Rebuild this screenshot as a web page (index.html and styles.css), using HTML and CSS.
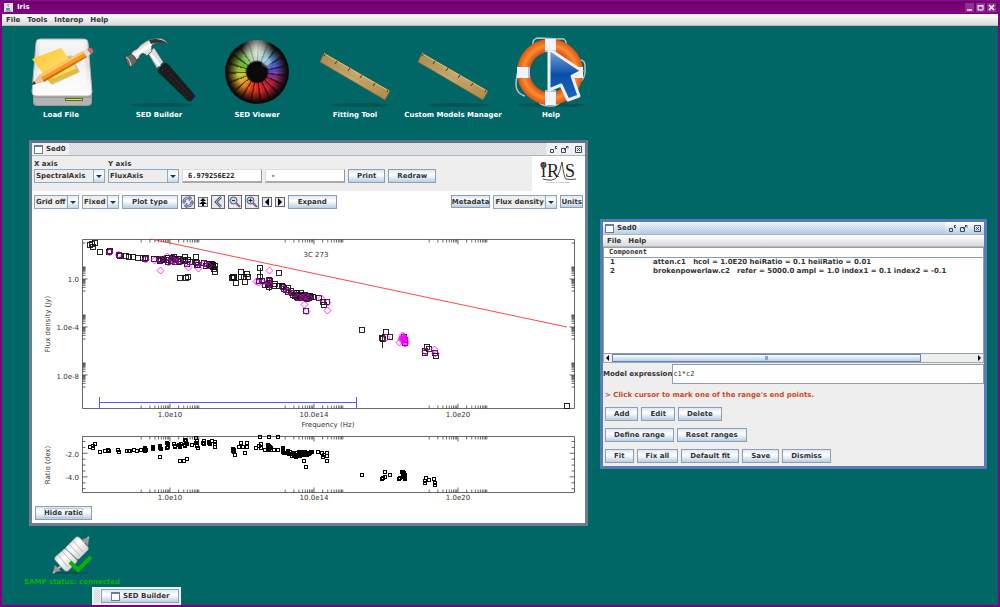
FILE: index.html
```html
<!DOCTYPE html>
<html lang="en">
<head>
    <meta charset="UTF-8">
    <meta name="viewport" content="width=device-width, initial-scale=1.0">
    <title>Iris</title>
    <link rel="stylesheet" href="styles.css">
</head>
<body>
    <div class="app">
        <header class="app-title">
            <svg class="java" viewBox="0 0 9 9"><rect width="9" height="9" fill="#dfe6ea"/><path d="M4.500 1q-1.500 1.500 0 2.500" stroke="#d33" fill="none"/><path d="M2 5h4v1.500q-2 1-4 0z" fill="#68a"/><path d="M1.500 8h6" stroke="#47a"/></svg>
            <h1>Iris</h1>
            <div class="app-controls">
                <button aria-label="Minimize"><svg viewBox="0 0 9 9"><path d="M2 7h5" stroke="#fff" stroke-width="1.300"/></svg></button>
                <button aria-label="Maximize"><svg viewBox="0 0 9 9"><path d="M2 3h5v4H2z" stroke="#fff" fill="none"/><path d="M1.500 2.500h6" stroke="#fff"/></svg></button>
                <button aria-label="Close"><svg viewBox="0 0 9 9"><path d="M2 2l5 5M7 2L2 7" stroke="#fff" stroke-width="1.500"/></svg></button>
            </div>
        </header>
        <nav class="menubar">
            <button>File</button>
            <button>Tools</button>
            <button>Interop</button>
            <button>Help</button>
        </nav>

        <main class="desktop">
            <div class="launchers">
                <button class="launcher">
                    <svg viewBox="0 0 72 72">
                        <defs>
                            <linearGradient id="drive" x1="0" y1="0" x2="0" y2="1"><stop offset="0" stop-color="#f4f4f4"/><stop offset=".3" stop-color="#dcdcdc"/><stop offset="1" stop-color="#fff"/></linearGradient>
                            <linearGradient id="note" x1="0" y1="0" x2="1" y2="1"><stop offset="0" stop-color="#fdc832"/><stop offset="1" stop-color="#ffe680"/></linearGradient>
                        </defs>
                        <path d="M8 56v10q0 4 4 4h50q5 0 5-4V56z" fill="#999"/>
                        <path d="M9 62h57v4q0 3-4 3H13q-4 0-4-3z" fill="#b4b4b4"/>
                        <path d="M15 3h44q4 0 4 4l4 49q0 4-4 4H11q-4 0-4-4l4-49q0-4 4-4z" fill="url(#drive)" stroke="#b5b5b5"/>
                        <path d="M15 8q0-2 2-2h40q2 0 2 2l3 40q-25 12-50 0z" fill="#fff" opacity=".5"/>
                        <rect x="40" y="62" width="18" height="3" fill="#5c6a20"/><rect x="41" y="63" width="16" height="1" fill="#c8f040"/>
                        <path d="M15 31l31-12 9 17-28 13z" fill="#000" opacity=".2"/>
                        <path d="M7 23l29-11 18 24-28 12z" fill="url(#note)"/>
                        <path d="M29 42l23-10 2 4-28 12-4-5z" fill="#e5b93a"/>
                        <path d="M14 39l44-24 4 6-43 25z" fill="#f59a22"/>
                        <path d="M14 39l44-24 1 2-44 25z" fill="#ffc766"/>
                        <path d="M18 44l43-24 1 1-43 25z" fill="#c96f10"/>
                        <path d="M14 39l5 7-13 3z" fill="#e8c596"/><path d="M9 45l2 3-5 1z" fill="#333"/>
                        <path d="M58 15l4-2 4 5-4 3z" fill="#ddd"/><path d="M62 13q4-3 6 1 1 3-2 4z" fill="#d9606a"/>
                    </svg>
                    <span>Load File</span>
                </button>
                <button class="launcher">
                    <svg viewBox="0 0 72 72">
                        <defs>
                            <linearGradient id="steel" x1="0" y1="0" x2="1" y2="1"><stop offset="0" stop-color="#555"/><stop offset=".4" stop-color="#fff"/><stop offset=".7" stop-color="#aaa"/><stop offset="1" stop-color="#eee"/></linearGradient>
                        </defs>
                        <ellipse class="shadow" cx="39" cy="69" rx="31" ry="2"/>
                        <path d="M25 17l6-5 9 14-6 6z" fill="#ddd" stroke="#888" stroke-width=".5"/>
                        <path d="M28 18l9 12" stroke="#fff" stroke-width="2"/>
                        <path d="M8 18q2-4 6-5Q22 3 32 2.500q9-1 13 5-8-4-16 1.500-1 4 0 6l-5 5q-3-4-6-2-2 2-2 4l-6 4z" fill="url(#steel)" stroke="#444" stroke-width=".6"/>
                        <path d="M26 4q10-3 18 3-8-2-16 1z" fill="#333"/>
                        <path d="M2 21l6-3q5 2 6 8l-6 5q-4-1-6-10z" fill="#666" stroke="#333" stroke-width=".5"/><path d="M3 21q4 2 5 9" stroke="#ddd" fill="none"/>
                        <path d="M35 34l6-7q2-1 4 1l26 30q2 3-1 5-2 4-6 1L36 37q-2-1-1-3z" fill="#1c1c1c"/>
                        <path d="M39 34l25 27M42 32l25 27" stroke="#484848" stroke-width="1" stroke-dasharray="1 3"/>
                    </svg>
                    <span>SED Builder</span>
                </button>
                <button class="launcher">
                    <i class="eye"></i>
                    <span>SED Viewer</span>
                </button>
                <button class="launcher">
                    <svg viewBox="0 0 72 72">
                        <defs>
                            <linearGradient id="wood" x1="0" y1="0" x2="1" y2="1"><stop offset="0" stop-color="#a88850"/><stop offset=".5" stop-color="#c9a96c"/><stop offset="1" stop-color="#a98748"/></linearGradient>
                            <g id="ruler">
                                <ellipse class="shadow" cx="41" cy="69" rx="30" ry="2"/>
                                <path d="M5 17l66 38-5 9-65-38z" fill="url(#wood)" stroke="#7c6030" stroke-width=".7"/>
                                <path d="M5 17.500l65 37.500" stroke="#dcc08a" stroke-width="1"/>
                                <path d="M3 22l65 38" stroke="#b8985c" stroke-width="1"/>
                                <path d="M6 18l-1 2M18 25l-2 3M31 32l-2 3M43 39l-2 3M56 47l-2 3M69 54l-1 2" stroke="#4a3510"/>
                            </g>
                        </defs>
                        <use href="#ruler"/>
                    </svg>
                    <span>Fitting Tool</span>
                </button>
                <button class="launcher">
                    <svg viewBox="0 0 72 72"><use href="#ruler"/></svg>
                    <span>Custom Models Manager</span>
                </button>
                <button class="launcher">
                    <svg viewBox="0 0 72 72">
                        <defs>
                            <radialGradient id="buoy" gradientUnits="userSpaceOnUse" cx="35" cy="36" r="33"><stop offset=".6" stop-color="#d0500c"/><stop offset=".8" stop-color="#ff8a34"/><stop offset="1" stop-color="#d9560e"/></radialGradient>
                            <linearGradient id="pointer" x1="0" y1="0" x2="0" y2="1"><stop offset="0" stop-color="#7fa9dd"/><stop offset=".5" stop-color="#0b50a8"/><stop offset="1" stop-color="#1668c4"/></linearGradient>
                        </defs>
                        <ellipse class="shadow" cx="36" cy="69" rx="34" ry="2"/>
                        <path d="M17 18q2-6 1-12 1-4 6-4l21 1q6-1 6 4v5M65 24q5 0 5 6v6q-1 9-6 10M5 30q-4 8-4 20 1 8 9 10M22 62q2 8 12 8 10 1 12-7" fill="none" stroke="#b8c4c4" stroke-width="1.500"/>
                        <circle cx="35" cy="36" r="26.500" fill="none" stroke="url(#buoy)" stroke-width="13"/>
                        <path d="M30 3h11v13H30zM30 56h11v13H30zM2 31h13v11H2zM55 31h13v11H55z" fill="#f2f4fc"/>
                        <path d="M30 55h11M30 15h11M14 31v11" stroke="#a9bfe8" stroke-width="2"/>
                        <path d="M34 13l33 22-10 5 7 20-11 4-7-15-12 5z" fill="url(#pointer)" stroke="#eee" stroke-width="3" stroke-linejoin="round"/>
                    </svg>
                    <span>Help</span>
                </button>
            </div>

            <section class="window viewer">
                <header class="window-title">
                    <i class="frame-icon"></i>
                    <h2>Sed0</h2>
                    <i class="grip"></i>
                    <div class="window-controls">
                        <button aria-label="Iconify"><svg viewBox="0 0 9 9"><use href="#iconify"/></svg></button>
                        <button aria-label="Maximize"><svg viewBox="0 0 9 9"><use href="#enlarge"/></svg></button>
                        <button aria-label="Close"><svg viewBox="0 0 9 9"><use href="#shut"/></svg></button>
                    </div>
                </header>
                <div class="coords">
                    <div class="coords-fields">
                        <div class="axis">
                            <label for="xAxis">X axis</label>
                            <span class="combo"><select id="xAxis"><option>SpectralAxis</option></select></span>
                        </div>
                        <div class="axis">
                            <label for="yAxis">Y axis</label>
                            <span class="combo"><select id="yAxis"><option>FluxAxis</option></select></span>
                        </div>
                        <input class="readout" type="text" aria-label="X value" value="6.979256E22">
                        <input class="readout" type="text" aria-label="Y value" value="-">
                        <button class="btn">Print</button>
                        <button class="btn">Redraw</button>
                    </div>
                    <svg class="logo" viewBox="0 0 53 35">
                        <text x="9" y="21" font-size="18">ı</text>
                        <text x="15" y="21" font-size="18">R</text>
                        <text x="33" y="21" font-size="18">S</text>
                        <path d="M11 23q10 3 14-2 3-5 5-15 2 16 4 17 5 1 10 0" fill="none" stroke="#222" stroke-width=".8"/>
                        <circle cx="11.500" cy="9" r="3" fill="#333"/><circle cx="10.500" cy="8.500" r="1" fill="#d33"/><circle cx="12.500" cy="8.500" r="1" fill="#3a6"/><circle cx="11.500" cy="10.500" r="1" fill="#46c"/>
                        <text x="26" y="27" font-size="2" text-anchor="middle">VAO SED ANALYSIS TOOL</text>
                    </svg>
                </div>
                <div class="tools">
                    <span class="combo"><select aria-label="Grid"><option>Grid off</option></select></span>
                    <span class="combo"><select aria-label="Range"><option>Fixed</option></select></span>
                    <button class="btn wide">Plot type</button>
                    <button class="tool" aria-label="Reset"><svg viewBox="0 0 12 12"><path d="M2 6q0-4 4-4h2M10 6q0 4-4 4H4" fill="none" stroke="#557" stroke-width="2.500"/><path d="M2 6q0-4 4-4h2M10 6q0 4-4 4H4" fill="none" stroke="#b4b8dc" stroke-width="1.300"/><path d="M7 0l3 2-3 3zM5 7L2 10l3 2zM0 5h4L2 8zM8 7l2-3 2 3z" fill="#8c8cbc" stroke="#446" stroke-width=".4"/></svg></button>
                    <button class="tool small" aria-label="Scroll up"><svg viewBox="0 0 8 8"><path d="M4 0l3 3H1zM4 3l4 3H5v2H3V6H0z"/></svg></button>
                    <button class="tool" aria-label="Back"><svg viewBox="0 0 12 12"><path d="M9 1L4 6l5 5" fill="none" stroke="#557" stroke-width="2.500"/><path d="M9 1L4 6l5 5" fill="none" stroke="#b4b8dc"/></svg></button>
                    <button class="tool" aria-label="Zoom out"><svg viewBox="0 0 12 12"><circle cx="4.500" cy="4.500" r="3.500" fill="#ccd6ee" stroke="#557"/><path d="M3 4.500h3" stroke="#224"/><path d="M7 7l4 4" stroke="#86608c" stroke-width="2"/></svg></button>
                    <button class="tool" aria-label="Zoom in"><svg viewBox="0 0 12 12"><circle cx="4.500" cy="4.500" r="3.500" fill="#ccd6ee" stroke="#557"/><path d="M2.500 4.500h4M4.500 2.500v4" stroke="#224"/><path d="M7 7l4 4" stroke="#86608c" stroke-width="2"/></svg></button>
                    <button class="tool small" aria-label="Left"><svg viewBox="0 0 8 8"><path d="M6 0v8L2 4z"/></svg></button>
                    <button class="tool small" aria-label="Right"><svg viewBox="0 0 8 8"><path d="M2 0v8l4-4z"/></svg></button>
                    <button class="btn wide">Expand</button>
                    <div class="tools-right">
                        <button class="btn tight">Metadata</button>
                        <span class="combo"><select aria-label="Y quantity"><option>Flux density</option></select></span>
                        <button class="btn tight">Units</button>
                    </div>
                </div>
                <svg class="chart" id="chart" viewBox="32 213 553 290"></svg>
                <footer class="viewer-footer"><button class="btn"><span class="focused">Hide ratio</span></button></footer>
            </section>

            <section class="window fitting">
                <header class="window-title">
                    <i class="frame-icon"></i>
                    <h2>Sed0</h2>
                    <i class="grip"></i>
                    <div class="window-controls">
                        <button aria-label="Iconify"><svg viewBox="0 0 9 9"><path id="iconify" d="M1.500 4.500h3v3h-3zM6 3.500h2M6.500 3V1M6 3l2-2" fill="none" stroke="#3b4868"/></svg></button>
                        <button aria-label="Maximize"><svg viewBox="0 0 9 9"><path id="enlarge" d="M1.500 3.500h4v4h-4zM4 5l4-4M6 1.500h2v2" fill="none" stroke="#3b4868"/></svg></button>
                        <button aria-label="Close"><svg viewBox="0 0 9 9"><path id="shut" d="M1.500 1.500h6v6h-6zM3 3l3 3M6 3L3 6" fill="none" stroke="#3b4868"/></svg></button>
                    </div>
                </header>
                <nav class="menubar">
                    <button>File</button>
                    <button>Help</button>
                </nav>
                <div class="components">
                    <table>
                        <thead>
                            <tr><th colspan="2">Component</th></tr>
                        </thead>
                        <tbody>
                            <tr><td>1</td><td>atten.c1&nbsp;&nbsp; hcol = 1.0E20 heiRatio = 0.1 heiiRatio = 0.01</td></tr>
                            <tr><td>2</td><td>brokenpowerlaw.c2&nbsp;&nbsp; refer = 5000.0 ampl = 1.0 index1 = 0.1 index2 = -0.1</td></tr>
                        </tbody>
                    </table>
                </div>
                <div class="scrollbar">
                    <button aria-label="Scroll left"><svg viewBox="0 0 8 8"><path d="M5 1v6L2 4z"/></svg></button>
                    <div class="track"><div class="thumb"></div></div>
                    <button aria-label="Scroll right"><svg viewBox="0 0 8 8"><path d="M3 1v6l3-3z"/></svg></button>
                </div>
                <div class="expression">
                    <label for="expression">Model expression</label>
                    <input type="text" id="expression" value="c1*c2">
                </div>
                <p class="hint">&gt; Click cursor to mark one of the range's end points.</p>
                <div class="actions">
                    <div class="row">
                        <button class="btn">Add</button>
                        <button class="btn">Edit</button>
                        <button class="btn">Delete</button>
                    </div>
                    <div class="row">
                        <button class="btn">Define range</button>
                        <button class="btn">Reset ranges</button>
                    </div>
                    <div class="row">
                        <button class="btn">Fit</button>
                        <button class="btn">Fix all</button>
                        <button class="btn">Default fit</button>
                        <button class="btn">Save</button>
                        <button class="btn">Dismiss</button>
                    </div>
                </div>
            </section>

            <button class="samp">
                <svg viewBox="0 0 40 40">
                    <defs><linearGradient id="plug" x1="0" y1="0" x2="1" y2="1"><stop offset="0" stop-color="#aaa"/><stop offset=".4" stop-color="#fff"/><stop offset="1" stop-color="#bbb"/></linearGradient></defs>
                    <ellipse class="shadow" cx="20" cy="38" rx="17" ry="1.500"/>
                    <path d="M31 8l6-6M1 38l8-7" stroke="#bbb" stroke-width="2"/>
                    <path d="M30 4l7-1-1 8zM1 37l2-7 6 6z" fill="#999"/>
                    <path d="M14 12L24 2q2-1 4 1l8 9q1 2 0 3l-9 9q-2 1-3-1l-10-9q-1-1 0-2z" fill="url(#plug)" stroke="#888" stroke-width=".6"/>
                    <path d="M3 22l9-8q1-1 3 1l9 9q2 2 1 3l-9 9q-2 1-4-1l-9-10q-1-1 0-3z" fill="url(#plug)" stroke="#888" stroke-width=".6"/>
                    <path d="M17 9l11 12M21 6l11 12M6 20l10 12M10 16l11 12" stroke="#bbb" fill="none"/>
                    <path d="M18 27l8 8 13-13" fill="none" stroke="#07b307" stroke-width="4"/>
                </svg>
                <span>SAMP status: connected</span>
            </button>

            <div class="dock">
                <i class="grip"></i>
                <button class="btn"><i class="frame-icon"></i>SED Builder</button>
            </div>
        </main>
    </div>

    <script src="chart.js"></script>
</body>
</html>
```

FILE: styles.css
```css
* {
    box-sizing: border-box;
}

body {
    margin: 0;
    font: bold 7px/10px "DejaVu Sans", sans-serif;
    color: #333;
}

button,
input,
select {
    font: inherit;
    color: inherit;
    margin: 0;
    padding: 0;
    border: 0;
    background: none;
    border-radius: 0;
}

button {
    white-space: nowrap;
}

svg {
    display: block;
}

h1,
h2,
p {
    margin: 0;
    font-size: 7px;
}

/* main application frame */
.app {
    display: flex;
    flex-direction: column;
    height: 100vh;
    border: 2px solid #800080;
    border-top: 0;
    overflow: hidden;
}

.app-title {
    display: flex;
    align-items: center;
    gap: 4px;
    height: 14px;
    padding: 0 2px;
    background: linear-gradient(#8a108a, #6e006e 2px, #860086);
    color: #fff;
}

.java {
    width: 9px;
    height: 9px;
}

.app-controls {
    display: flex;
    gap: 2px;
    margin-left: auto;
}

.app-controls button {
    width: 9px;
    height: 9px;
    background: #933093;
}

.menubar {
    display: flex;
    gap: 7px;
    height: 12px;
    padding: 0 4px;
    background: linear-gradient(#fff, #dadada);
    border-bottom: 1px solid #b8b8b8;
}

.desktop {
    position: relative;
    flex: 1;
    background: #006666;
}

/* desktop icons */
.launchers {
    display: flex;
    padding: 10px;
}

.launcher {
    display: flex;
    flex-direction: column;
    align-items: center;
    gap: 2px;
    width: 98px;
    color: #fff;
}

.launcher svg {
    width: 72px;
    height: 72px;
}

.shadow {
    fill: #004848;
    opacity: 0.6;
}

.eye {
    width: 64px;
    height: 64px;
    margin: 4px;
    border-radius: 50%;
    background:
        radial-gradient(circle at 65% 35%, #ffffff55 0 3px, transparent 6px),
        radial-gradient(circle, #0a0a0a 10px, transparent 12px),
        radial-gradient(ellipse at 50% 16%, #ffffffbb, transparent 34%),
        radial-gradient(circle, transparent 19px, #180808aa 26px, #0a0a0a 30px),
        repeating-conic-gradient(#00000088 0deg 3deg, transparent 6deg 13deg, #ffffff22 15deg, transparent 17deg 19deg),
        conic-gradient(#8cb08c, #58a8c8 35deg, #4858c8 70deg, #7038a0 95deg, #a02040 120deg, #d82020 170deg, #e03818 200deg, #e89828 230deg, #c8c828 260deg, #68b030 300deg, #8cb08c);
}

/* internal windows */
.window {
    position: absolute;
    border: 3px solid #6d7c90;
    border-top-color: #5d7388;
    background: #eee;
}

.viewer {
    left: 27px;
    top: 114px;
    width: 559px;
    background: #fff;
}

.fitting {
    left: 598px;
    top: 193px;
    width: 387px;
    border-color: #5a7ab5;
}

.window-title {
    display: flex;
    align-items: center;
    gap: 3px;
    height: 13px;
    padding: 0 2px;
    background: #f0f0f0;
    border-bottom: 1px solid #b0b4b8;
}

.fitting .window-title {
    background: linear-gradient(#fff, #b8cfe5);
}

.frame-icon {
    width: 9px;
    height: 9px;
    border: 1px solid #6c7c90;
    border-top-width: 2px;
    background: #fff;
}

.grip {
    flex: 1;
    align-self: stretch;
    background: conic-gradient(#d2d6da 25%, #ebeced 0 50%, #d2d6da 0 75%, #ebeced 0) 0 0 / 2px 2px;
}

.fitting .grip {
    background: conic-gradient(#8fa9cc55 25%, transparent 0 50%, #8fa9cc55 0 75%, transparent 0) 0 0 / 2px 2px;
}

.window-controls {
    display: flex;
    gap: 2px;
}

.window-controls button {
    width: 9px;
    height: 9px;
}

.window-controls button:last-child {
    margin-left: 3px;
}

/* metal look buttons and combos */
.btn {
    display: flex;
    align-items: center;
    justify-content: center;
    gap: 3px;
    height: 14px;
    padding: 0 8px;
    border: 1px solid #8d9fb1;
    background: linear-gradient(#dde8f3, #fff 40%, #b8cfe5);
}

.btn.wide {
    padding: 0 9px;
}

.btn.tight {
    height: 13px;
    padding: 0;
}

.combo {
    position: relative;
    display: flex;
}

.combo select {
    appearance: none;
    height: 14px;
    padding: 0 12px 0 1px;
    border: 1px solid #8fa6bd;
    background: #eee;
    white-space: nowrap;
}

.combo::before {
    content: "";
    position: absolute;
    right: 1px;
    top: 1px;
    bottom: 1px;
    width: 10px;
    border-left: 1px solid #8fa6bd;
    background: linear-gradient(#e4edf5, #fff 40%, #c4d7e9);
    pointer-events: none;
}

.combo::after {
    content: "";
    position: absolute;
    right: 3px;
    top: 6px;
    border: 3px solid transparent;
    border-top-color: #333;
    border-bottom: 0;
    pointer-events: none;
}

/* SED viewer */
.coords {
    display: flex;
    justify-content: space-between;
    height: 35px;
    background: #eee;
}

.coords-fields {
    display: flex;
    align-items: flex-end;
    gap: 3px;
    padding: 0 0 8px 2px;
}

.axis {
    display: flex;
    flex-direction: column;
}

.axis select {
    width: 71px;
}

.readout {
    width: 80px;
    height: 14px;
    padding: 0 5px;
    border: 1px solid #ddd;
    border-right-color: #999;
    border-bottom: 2px solid #aaa;
    background: #fff;
    color: #222;
    font-family: "DejaVu Sans Mono", monospace;
}

.logo {
    width: 53px;
    background: #fff;
    font-family: "Liberation Serif", serif;
    font-weight: normal;
    fill: #222;
}

.tools {
    display: flex;
    align-items: center;
    gap: 3px;
    padding: 4px 2px;
}

.tools-right {
    display: flex;
    gap: 3px;
    margin-left: auto;
}

.tool {
    width: 14px;
    height: 14px;
    border: 1px solid #667;
    background: #e4eaf0;
}

.tool.small {
    width: 10px;
    height: 10px;
}

.chart {
    width: 100%;
    font-weight: normal;
}

.chart text {
    fill: #333;
}

.axes {
    fill: none;
    stroke: #444;
    stroke-width: 0.8;
}

.flux-point {
    fill: none;
    stroke: #111;
    stroke-width: 0.9;
}

.ratio-point {
    fill: none;
    stroke: #000;
    stroke-width: 1;
}

.optical-point {
    fill: none;
    stroke: #f0f;
    stroke-width: 0.8;
}

.model {
    stroke: #f33;
    stroke-width: 0.9;
}

.range {
    fill: none;
    stroke: #44f;
    stroke-width: 0.9;
}

.viewer-footer {
    display: flex;
    padding: 3px;
}

.focused {
    outline: 1px solid #b8c8dc;
    outline-offset: -1px;
}

/* fitting tool */
.components {
    height: 107px;
    border: 1px solid #8d9fb1;
    background: #fff;
}

.components table {
    width: 100%;
    border-collapse: collapse;
}

.components th {
    padding: 0 5px;
    border-bottom: 1px solid #8d9fb1;
    text-align: left;
    line-height: 9px;
    font-family: "DejaVu Sans Mono", monospace;
}

.components td {
    padding: 0 6px;
    line-height: 9px;
}

.components td:first-child {
    width: 43px;
}

.scrollbar {
    display: flex;
    height: 9px;
    border: 1px solid #a0a8b0;
    border-top: 0;
}

.scrollbar button {
    width: 8px;
}

.track {
    flex: 1;
    background: #eee;
}

.thumb {
    width: 85%;
    height: 8px;
    border: 1px solid #6382bf;
    background:
        linear-gradient(#8ba6d0, #8ba6d0) center / 3px 4px no-repeat,
        linear-gradient(#fff, #b8cfe5);
}

.expression {
    display: flex;
    align-items: center;
    white-space: nowrap;
}

.expression input {
    flex: 1;
    min-width: 0;
    height: 20px;
    margin-top: 1px;
    border: 1px solid #8d9fb1;
    background: #fff;
    font-weight: normal;
    font-family: "DejaVu Sans Mono", monospace;
}

.hint {
    padding: 6px 2px 4px;
    color: #cc4a22;
}

.actions {
    display: flex;
    flex-direction: column;
    gap: 7px;
    padding: 3px 2px;
}

.row {
    display: flex;
    gap: 3px;
}

/* bottom of the desktop */
.samp {
    position: absolute;
    left: 22px;
    bottom: 18px;
    display: flex;
    flex-direction: column;
    align-items: center;
    gap: 2px;
    color: #00b800;
}

.samp svg {
    width: 40px;
    height: 40px;
}

.dock {
    position: absolute;
    left: 90px;
    bottom: 0;
    display: flex;
    gap: 1px;
    padding: 2px;
    background: #eee;
}

.dock .grip {
    width: 6px;
}

.dock .btn {
    padding: 0 9px;
}
```

FILE: chart.js
```js
const fluxPoints = [
    [90, 245], [95, 243], [93, 247], [92, 244], [100, 252], [109, 252], [110, 251], [119, 255], [120, 256], [126, 256], [129, 257],
    [133, 257], [138, 258], [143, 258], [145, 259], [146, 258], [154, 259], [160, 259], [161, 260], [163, 259], [164, 260],
    [167, 258], [168, 262], [172, 258], [175, 259], [175, 262], [178, 259], [179, 262], [181, 261], [185, 257], [185, 261],
    [187, 264], [190, 262], [188, 260], [196, 257], [196, 262], [197, 263], [198, 265], [204, 263], [206, 266], [209, 265],
    [210, 264], [212, 264], [213, 267], [215, 266], [215, 272], [180, 278], [186, 278], [188, 277],
    [160, 261], [167, 260], [168, 258], [171, 261], [174, 257], [176, 260], [180, 259], [183, 260], [197, 265], [207, 264],
    [213, 265], [214, 269], [211, 266],
    [232, 278], [234, 278], [234, 277], [233, 277], [236, 283], [241, 272], [241, 277], [244, 277], [245, 282], [247, 274],
    [248, 277], [260, 268], [260, 277], [259, 281], [262, 281], [265, 285], [269, 280], [269, 283], [269, 285], [269, 287],
    [270, 281], [268, 284], [270, 285], [274, 286], [275, 284], [279, 273], [279, 286], [283, 287], [284, 289], [282, 286],
    [288, 288], [288, 292], [286, 290], [292, 293], [293, 295], [295, 296], [291, 291], [294, 293], [296, 295],
    [297, 293], [297, 297], [299, 296], [301, 293], [301, 297], [303, 296], [305, 295], [306, 298], [308, 296], [309, 298],
    [298, 298], [300, 295], [302, 298], [304, 297], [305, 297], [307, 296], [310, 296],
    [311, 297], [313, 297], [319, 298], [307, 299], [323, 302], [324, 305], [327, 302], [306, 311],
    [362, 330], [386, 332], [390, 337], [382, 338], [383, 339], [404, 337], [405, 340], [405, 343], [427, 347], [425, 351],
    [425, 353], [429, 349], [435, 353], [436, 356], [567, 406]
];

const opticalPoints = [
    [109, 252], [118, 254], [145, 259], [154, 260], [160, 259], [167, 256], [168, 262], [160, 270], [173, 260], [175, 261],
    [179, 260], [188, 267], [187, 263], [198, 268], [197, 263], [204, 263], [208, 265], [256, 281], [258, 282], [262, 282],
    [269, 270], [268, 281], [269, 284], [283, 288], [288, 291], [293, 293], [298, 297], [302, 297], [305, 296], [308, 297],
    [304, 304], [306, 311], [321, 298], [327, 302], [327, 310], [386, 337], [399, 342], [402, 335], [403, 336], [402, 338],
    [404, 338], [403, 340], [404, 341], [405, 343], [401, 339], [402, 337], [403, 338], [403, 339], [404, 339], [404, 343],
    [405, 341], [403, 337], [425, 351], [434, 349], [435, 353]
];

const ratioPoints = [
    [90, 447], [93, 448], [93, 446], [95, 444], [100, 452], [105, 451], [108, 450], [109, 451], [118, 450], [119, 452],
    [127, 451], [129, 451], [130, 451], [134, 450], [137, 451], [141, 450], [145, 448], [146, 450], [145, 451], [153, 447],
    [153, 449], [160, 446], [160, 448], [161, 449], [160, 457], [167, 443], [168, 445], [167, 448], [174, 444], [175, 447],
    [180, 446], [181, 444], [180, 447], [185, 440], [186, 443], [185, 446], [187, 444], [180, 461], [184, 461], [187, 459],
    [192, 445], [196, 438], [197, 441], [197, 445], [198, 448], [196, 443], [204, 441], [204, 444], [209, 442], [210, 444],
    [145, 449], [145, 450], [153, 448], [160, 447], [168, 444], [168, 447], [175, 446], [179, 445], [186, 441], [185, 445],
    [197, 443], [197, 446], [203, 443], [209, 443],
    [212, 441], [215, 442], [215, 444], [215, 447], [233, 449], [233, 451], [234, 452], [235, 455], [239, 447], [241, 443],
    [234, 450], [243, 447], [245, 453], [247, 443], [247, 447], [256, 448], [259, 446], [260, 437], [261, 444], [261, 448],
    [265, 450], [268, 445], [268, 448], [270, 447], [269, 450], [271, 450], [269, 437], [278, 437], [274, 450], [278, 450],
    [269, 446], [269, 448], [268, 449], [271, 448], [283, 448], [283, 449], [283, 450], [283, 452],
    [283, 451], [284, 453], [288, 451], [289, 454], [291, 454], [288, 452], [293, 453], [295, 455], [297, 453], [297, 456],
    [287, 453], [290, 452], [292, 454], [292, 456], [294, 455], [296, 457], [298, 455], [300, 454], [302, 455], [304, 455],
    [306, 454], [307, 455], [300, 456], [295, 456], [299, 452], [305, 452], [310, 453], [311, 452],
    [299, 454], [301, 452], [301, 455], [303, 454], [305, 453], [306, 455], [308, 453], [309, 454], [312, 452], [303, 452],
    [304, 461], [306, 467], [318, 452], [322, 453], [323, 457], [324, 455], [327, 453], [327, 456], [327, 461],
    [362, 475], [382, 479], [383, 478], [385, 472], [385, 477], [390, 475], [399, 479], [400, 478], [402, 472], [403, 474],
    [404, 476], [405, 478], [404, 474], [403, 477], [405, 479], [403, 472], [403, 475], [404, 477], [405, 475], [404, 473],
    [425, 481], [425, 483], [426, 478], [429, 480], [434, 479], [435, 483], [435, 485]
];

const LEFT = 82.5;
const RIGHT = 574.5;
const majorX = [170, 314, 458];
const svg = document.getElementById("chart");

function draw(tag, attributes, text) {
    const node = document.createElementNS("http://www.w3.org/2000/svg", tag);
    for (const name in attributes) {
        node.setAttribute(name, attributes[name]);
    }
    if (text) {
        node.textContent = text;
    }
    svg.appendChild(node);
}

// log ticks in the decade below and above a major tick
function logTicks(major, decade) {
    const ticks = [];
    for (let i = 2; i <= 10; i++) {
        ticks.push(major + decade * Math.log10(i));
        ticks.push(major - decade + decade * Math.log10(i - 1));
    }
    return ticks;
}

function frame(top, bottom) {
    let d = `M${LEFT} ${top}H${RIGHT}V${bottom}H${LEFT}Z`;
    majorX.forEach(x => {
        d += `M${x} ${top}v5M${x} ${bottom}v-5`;
        logTicks(x, 28.8).forEach(t => {
            d += `M${t} ${top}v3M${t} ${bottom}v-3`;
        });
    });
    return d;
}

function sideTick(y, length) {
    return `M${LEFT} ${y}h${length}M${RIGHT} ${y}h${-length}`;
}

function squares(points, className, size) {
    points.forEach(([x, y]) => {
        draw("rect", { class: className, x: x - size / 2, y: y - size / 2, width: size, height: size });
    });
}

// flux plot
let fluxAxes = frame(239.5, 408.5);
[279, 327, 375, 231].forEach(y => {
    if (y > 239) {
        fluxAxes += sideTick(y, 5);
    }
    logTicks(y, -12).forEach(t => {
        if (t > 240 && t < 408) {
            fluxAxes += sideTick(t, 3);
        }
    });
});
draw("path", { class: "axes", d: fluxAxes });
draw("line", { class: "model", x1: 151, y1: 239, x2: 567, y2: 327 });
squares(fluxPoints, "flux-point", 5);
draw("path", { class: "flux-point", d: "M382.500 334v14M260.500 268v16M269.500 277v14" });
opticalPoints.forEach(([x, y]) => {
    draw("path", { class: "optical-point", d: `M${x + 0.5} ${y - 3}l3.500 3.500-3.500 3.500-3.500-3.500z` });
});
draw("path", { class: "range", d: "M99.500 397v11M99.500 402.500H356.500M356.500 397v11" });

// ratio plot
let ratioAxes = frame(436.5, 492.5);
for (let i = 0; i < 9; i++) {
    ratioAxes += sideTick(441.5 + i * 5.9, i === 2 || i === 6 ? 5 : 3);
}
draw("path", { class: "axes", d: ratioAxes });
squares(ratioPoints, "ratio-point", 3);

// labels
draw("text", { x: 316, y: 257, "text-anchor": "middle" }, "3C 273");
draw("text", { x: 328, y: 427, "text-anchor": "middle" }, "Frequency (Hz)");
[["1.0", 282], ["1.0e-4", 330], ["1.0e-8", 379], ["-2.0", 457], ["-4.0", 480]].forEach(([label, y]) => {
    draw("text", { x: 79, y: y, "text-anchor": "end" }, label);
});
["1.0e10", "10.0e14", "1.0e20"].forEach((label, i) => {
    draw("text", { x: majorX[i], y: 417, "text-anchor": "middle" }, label);
    draw("text", { x: majorX[i], y: 500, "text-anchor": "middle" }, label);
});
draw("text", { transform: "translate(50 324) rotate(-90)", "text-anchor": "middle" }, "Flux density (Jy)");
draw("text", { transform: "translate(50 465) rotate(-90)", "text-anchor": "middle" }, "Ratio (dex)");
```
